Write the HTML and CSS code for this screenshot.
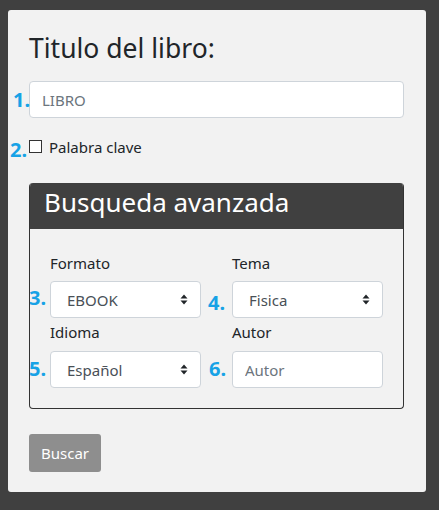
FILE: index.html
```html
<!DOCTYPE html>
<html lang="es">
<head>
<meta charset="utf-8">
<title>Buscar libro</title>
<link rel="stylesheet" href="styles.css">
</head>
<body>
<div class="card">
  <h1 class="title">Titulo del libro:</h1>
  <div class="field field-main">
    <span class="num num-1">1.</span>
    <input class="control" type="text" placeholder="LIBRO">
  </div>
  <label class="check">
    <span class="num num-2">2.</span>
    <span class="box"></span>
    <span class="check-text">Palabra clave</span>
  </label>
  <div class="panel">
    <div class="panel-head">Busqueda avanzada</div>
    <div class="panel-body">
      <div class="group">
        <div class="label">Formato</div>
        <div class="field">
          <span class="num num-3">3.</span>
          <select class="control select"><option>EBOOK</option></select>
        </div>
      </div>
      <div class="group">
        <div class="label">Tema</div>
        <div class="field">
          <span class="num num-4">4.</span>
          <select class="control select"><option>Fisica</option></select>
        </div>
      </div>
      <div class="group">
        <div class="label label-row2">Idioma</div>
        <div class="field">
          <span class="num num-5">5.</span>
          <select class="control select"><option>Español</option></select>
        </div>
      </div>
      <div class="group">
        <div class="label label-row2">Autor</div>
        <div class="field">
          <span class="num num-6">6.</span>
          <input class="control" type="text" placeholder="Autor">
        </div>
      </div>
    </div>
  </div>
  <button class="btn" type="button">Buscar</button>
</div>
</body>
</html>
```

FILE: styles.css
```css
* { box-sizing: border-box; }

html, body {
  margin: 0;
  background: #404040;
  font-family: "Noto Sans", "Open Sans", sans-serif;
  color: #212529;
}

body {
  padding: 10px 13px 18px 8px;
}

.card {
  background: #f2f2f2;
  border-radius: 3px;
  padding: 20px 22px 20px 21px;
  display: flex;
  flex-direction: column;
  align-items: flex-start;
}

.title {
  margin: 0;
  font-size: 26.5px;
  font-weight: 400;
  line-height: 37px;
  height: 51px;
  color: #212529;
}

.field {
  position: relative;
  width: 100%;
}

.num {
  position: absolute;
  left: -21px;
  top: 8px;
  font-size: 20px;
  font-weight: 700;
  line-height: 20px;
  color: #17a2e6;
}

.num-1 { left: -16px; top: 9px; }
.num-2 { left: -19px; top: 0px; }
.num-3 { top: 7px; }
.num-4 { left: -24px; top: 12px; }
.num-5 { top: 8px; }
.num-6 { left: -23px; top: 8px; }

.control {
  display: block;
  width: 100%;
  height: 37px;
  border: 1px solid #ced4da;
  border-radius: 4px;
  background: #fff;
  font-family: inherit;
  font-size: 15px;
  color: #495057;
  padding: 0 12px;
  outline: none;
}

.control::placeholder {
  color: #6c757d;
}

.select {
  appearance: none;
  -webkit-appearance: none;
  padding: 0 16px;
  background-image: url("data:image/svg+xml;utf8,<svg xmlns='http://www.w3.org/2000/svg' width='8' height='11' viewBox='0 0 8 11'><path d='M0.5 4.5 L4 0.5 L7.5 4.5 Z M0.5 6.5 L4 10.5 L7.5 6.5 Z' fill='%23212529'/></svg>");
  background-repeat: no-repeat;
  background-position: right 12px center;
  background-size: 8px 11px;
}

.check {
  position: relative;
  display: flex;
  align-items: center;
  margin-top: 22px;
  height: 13px;
  font-size: 15px;
}

.box {
  width: 13px;
  height: 13px;
  border: 1px solid #333;
  background: #fff;
}

.check-text {
  margin-left: 7px;
  line-height: 13px;
  padding-top: 1px;
}

.panel {
  width: 100%;
  margin-top: 30px;
  border: 1px solid #333;
  border-top: 0;
  border-radius: 4px;
  overflow: hidden;
}

.panel-head {
  background: #404040;
  color: #fff;
  font-size: 26px;
  line-height: 39px;
  height: 46px;
  padding: 0 14px;
}

.panel-body {
  display: grid;
  grid-template-columns: 151px 151px;
  column-gap: 31px;
  padding: 20px;
}

.label {
  font-size: 15px;
  line-height: 20px;
  height: 32px;
  padding-top: 4px;
}

.label-row2 {
  height: 33px;
  padding-top: 4px;
}

.btn {
  margin-top: 25px;
  height: 38px;
  padding: 0 12px;
  border: 0;
  border-radius: 3px;
  background: #8e8e8e;
  color: #fff;
  font-family: inherit;
  font-size: 15px;
}
```
